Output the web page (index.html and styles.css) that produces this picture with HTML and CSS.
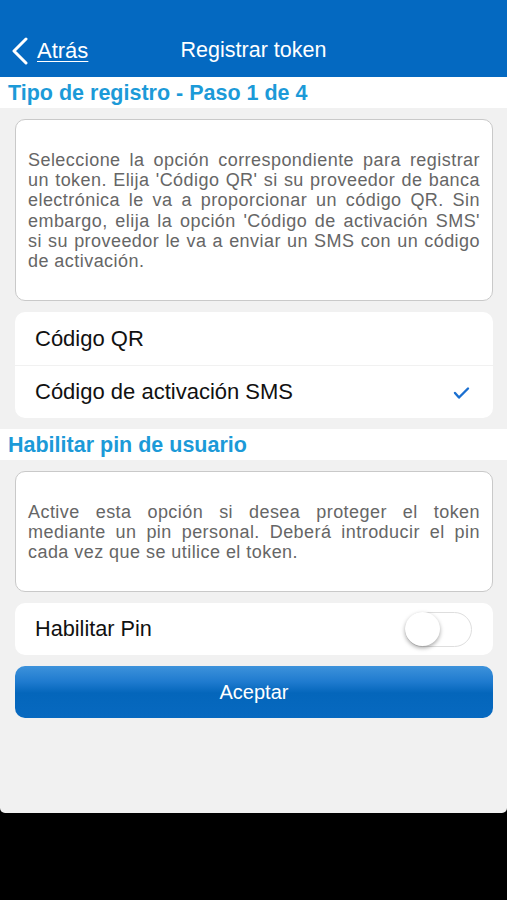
FILE: index.html
```html
<!DOCTYPE html>
<html lang="es">
<head>
    <meta charset="UTF-8">
    <meta name="viewport" content="width=device-width, initial-scale=1.0">
    <title>Registrar token</title>
    <link rel="stylesheet" href="styles.css">
</head>
<body>
    <div class="screen">
        <div class="navbar">
            <a class="back" href="#">
                <svg class="chevron" width="18" height="28" viewBox="0 0 18 28">
                    <polyline points="15,2 3,14 15,26" fill="none" stroke="#fff" stroke-width="3" stroke-linecap="round" stroke-linejoin="round"/>
                </svg>
                <span>Atrás</span>
            </a>
            <div class="title">Registrar token</div>
        </div>

        <h2 class="section-title">Tipo de registro - Paso 1 de 4</h2>
        <div class="content">
            <div class="info-box tall">
                <p>Seleccione la opción correspondiente para registrar un token. Elija 'Código QR' si su proveedor de banca electrónica le va a proporcionar un código QR. Sin embargo, elija la opción 'Código de activación SMS' si su proveedor le va a enviar un SMS con un código de activación.</p>
            </div>
            <div class="group">
                <div class="row">Código QR</div>
                <div class="row">
                    <span>Código de activación SMS</span>
                    <svg class="check" width="18" height="14" viewBox="0 0 18 14">
                        <polyline points="2,7 6,11.5 15,2.5" fill="none" stroke="#1a6fd0" stroke-width="2.4" stroke-linecap="round" stroke-linejoin="round"/>
                    </svg>
                </div>
            </div>
        </div>

        <h2 class="section-title">Habilitar pin de usuario</h2>
        <div class="content">
            <div class="info-box short">
                <p>Active esta opción si desea proteger el token mediante un pin personal. Deberá introducir el pin cada vez que se utilice el token.</p>
            </div>
            <div class="group">
                <div class="row single">
                    <span>Habilitar Pin</span>
                    <div class="switch"><div class="knob"></div></div>
                </div>
            </div>
            <button class="accept">Aceptar</button>
        </div>
    </div>
</body>
</html>
```
FILE: styles.css
```css
body {
    margin: 0;
    background: #000;
    font-family: "Liberation Sans", Arial, sans-serif;
}
.screen {
    height: 813px;
    background: #f1f1f1;
    border-radius: 0 0 5px 5px;
    overflow: hidden;
}
.navbar {
    height: 77px;
    background: #0469c1;
    box-sizing: border-box;
    padding-top: 25px;
    display: flex;
    align-items: center;
    position: relative;
    color: #fff;
}
.back {
    display: flex;
    align-items: center;
    color: #fff;
    text-decoration: none;
    padding-left: 11px;
    font-size: 22px;
    z-index: 1;
}
.back span {
    margin-left: 8px;
    text-decoration: underline;
    text-decoration-thickness: 1px;
    text-underline-offset: 3px;
}
.title {
    position: absolute;
    left: 0;
    right: 0;
    bottom: 14px;
    text-align: center;
    font-size: 21.5px;
}
.section-title {
    margin: 0;
    height: 31px;
    line-height: 32px;
    background: #fff;
    color: #1c9ad8;
    font-size: 21.5px;
    font-weight: bold;
    padding-left: 8px;
}
.content {
    padding: 11px 14px 11px 15px;
    display: flex;
    flex-direction: column;
    gap: 11px;
}
.info-box {
    background: #fff;
    border: 1px solid #c9c9c9;
    border-radius: 10px;
    box-sizing: border-box;
    display: flex;
    align-items: center;
    padding: 1px 12px 0 12px;
}
.info-box.tall {
    height: 182px;
}
.info-box.short {
    height: 121px;
}
.info-box p {
    margin: 0;
    color: #666;
    font-size: 18px;
    letter-spacing: 0.45px;
    line-height: 20.3px;
    text-align: justify;
}
.group {
    background: #fff;
    border-radius: 10px;
}
.row {
    height: 53px;
    display: flex;
    align-items: center;
    justify-content: space-between;
    padding: 0 22px 0 20px;
    font-size: 22px;
    color: #111;
}
.row + .row {
    border-top: 1px solid #f1f1f1;
    height: 52px;
}
.row.single {
    height: 52px;
    padding-right: 21px;
    font-size: 21.7px;
}
.check {
    margin-top: 2px;
}
.switch {
    width: 67px;
    height: 35px;
    border-radius: 18px;
    border: 1.5px solid #dedede;
    box-sizing: border-box;
    background: #fff;
    position: relative;
}
.knob {
    position: absolute;
    left: -1px;
    top: -1px;
    width: 35px;
    height: 34px;
    border-radius: 50%;
    background: #fff;
    box-shadow: 0 2px 4px rgba(0, 0, 0, 0.35);
}
.accept {
    height: 52px;
    border: none;
    border-radius: 10px;
    color: #fff;
    font-family: "Liberation Sans", Arial, sans-serif;
    font-size: 20px;
    background: linear-gradient(#3d92db 0%, #1f7bcf 30%, #0466bb 52%, #0769c0 100%);
}
```
